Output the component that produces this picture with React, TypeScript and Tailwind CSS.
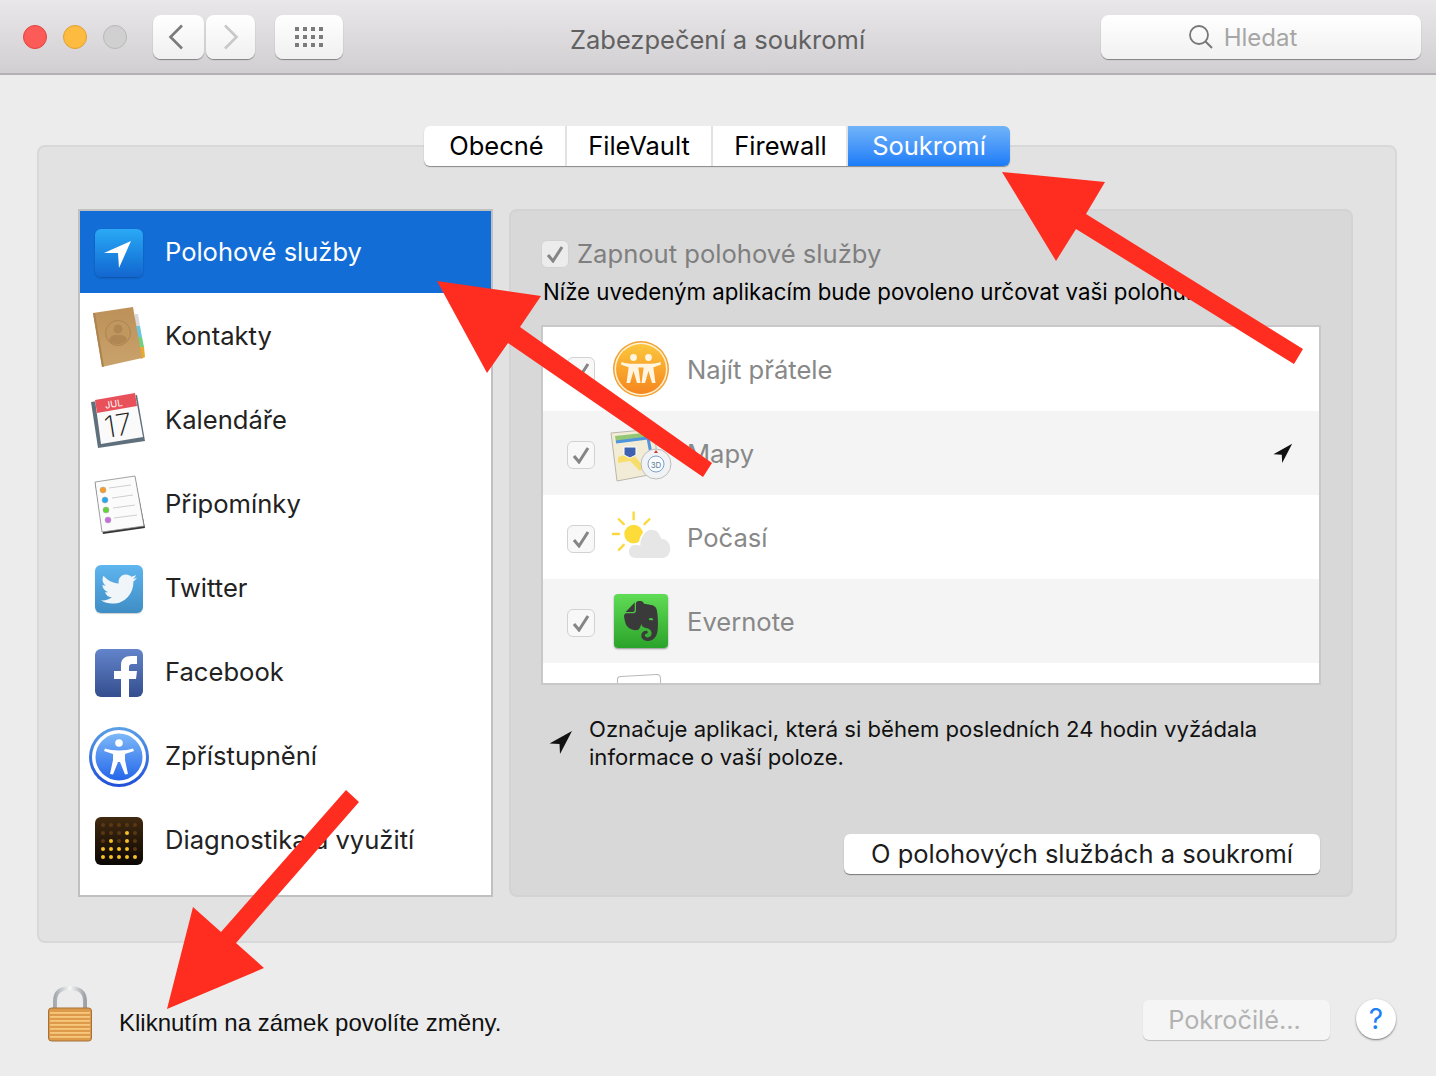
import { SiEvernote } from "react-icons/si";
import { FaTwitter } from "react-icons/fa";

const font = "font-['Inter','Noto_Sans',sans-serif]";

const LocationArrow = ({ className = "" }: { className?: string }) => (
  <svg viewBox="0 0 24 24" className={className}>
    <path d="M23 1 L0.5 13.5 L10.5 14 L11 24 Z" fill="currentColor" />
  </svg>
);

const ContactsIcon = () => (
  <svg viewBox="0 0 60 62" className="w-[60px] h-[62px]">
    <defs>
      <linearGradient id="book" x1="0" y1="0" x2="0" y2="1">
        <stop offset="0" stopColor="#bd9159" />
        <stop offset="1" stopColor="#c9a26b" />
      </linearGradient>
    </defs>
    <path d="M46 8 L49 8 L51 20 L46 20 Z" fill="#d8d8d8" />
    <path d="M47 20 L51 20 L53 31 L48 31 Z" fill="#6cc5e0" />
    <path d="M48 31 L53 31 L55 41 L50 41 Z" fill="#72cf7e" />
    <path d="M50 41 L55 41 L56 51 L52 53 Z" fill="#e8a92e" />
    <path d="M4 7 L44 1 L53 52 L13 61 Z" fill="url(#book)" />
    <path d="M4 7 L6 7 L15 60.5 L13 61 Z" fill="#ad8450" />
    <circle cx="29" cy="27" r="12.5" fill="#c0985f" stroke="#ad8450" strokeWidth="1" />
    <circle cx="29" cy="23" r="4.5" fill="#b08652" />
    <path d="M20 35 C21 29 25 29 29 29 C33 29 37 29 38 34 C34 39 25 40 20 35 Z" fill="#b08652" />
  </svg>
);

const CalendarIcon = () => (
  <svg viewBox="0 1 60 60" className="w-[60px] h-[60px]">
    <path d="M2 12 L48 5 L56 51 L9 58 Z" fill="#5f707c" />
    <path d="M6 10 L46 3 L54 47 L12 54 Z" fill="#fafafa" />
    <path d="M6 10 L46 3 L48 16 L8 23 Z" fill="#e8505a" />
    <g transform="rotate(-9 28 28)">
      <text x="27" y="17" textAnchor="middle" fontSize="9.5" fill="#ffffff" fontFamily="Inter">JUL</text>
      <text x="28" y="46" textAnchor="middle" fontSize="30" fontWeight="200" fill="#222222" fontFamily="Inter">17</text>
    </g>
  </svg>
);

const RemindersIcon = () => (
  <svg viewBox="0 1 60 60" className="w-[60px] h-[60px]">
    <path d="M6 9 L46 3 L56 54 L14 60 Z" fill="#333333" />
    <path d="M6 8 L46 2 L55 52 L13 58 Z" fill="#fbfbfb" stroke="#8a8a8a" strokeWidth="0.8" />
    <g stroke="#cfcfcf" strokeWidth="1">
      <path d="M20 14 L42 11" />
      <path d="M23 24 L44 21" />
      <path d="M24 34 L46 31" />
      <path d="M25 44 L48 41" />
    </g>
    <circle cx="14" cy="16" r="3" fill="#fb9a25" stroke="#aaa" strokeWidth="0.6" />
    <circle cx="16" cy="26" r="3" fill="#22a7f0" stroke="#aaa" strokeWidth="0.6" />
    <circle cx="17" cy="36" r="3" fill="#62d13a" stroke="#aaa" strokeWidth="0.6" />
    <circle cx="19" cy="46" r="3" fill="#c96be0" stroke="#aaa" strokeWidth="0.6" />
  </svg>
);

const TwitterIcon = () => (
  <div className="w-12 h-12 rounded-md bg-gradient-to-b from-[#5fb5ef] to-[#3f8dc5] flex items-center justify-center shadow-[0_1px_1px_rgba(0,0,0,0.2)]">
    <FaTwitter className="w-[36px] h-[36px] text-[#f0f5f9]" />
  </div>
);

const FacebookIcon = () => (
  <svg viewBox="0 0 48 48" className="w-12 h-12">
    <defs>
      <linearGradient id="fb" x1="0" y1="0" x2="0" y2="1">
        <stop offset="0" stopColor="#6384cb" />
        <stop offset="1" stopColor="#344e8e" />
      </linearGradient>
    </defs>
    <rect width="48" height="48" rx="6" fill="url(#fb)" />
    <path d="M26 48 V30 H19 V22 H26 V16 C26 10 30 7 36 7 H42 V15 H37 C35 15 34 16 34 18 V22 H42 L41 30 H34 V48 Z" fill="#ffffff" />
  </svg>
);

const AccessIcon = () => (
  <svg viewBox="0 0 60 60" className="w-[60px] h-[60px]">
    <defs>
      <linearGradient id="acc" x1="0" y1="0" x2="0" y2="1">
        <stop offset="0" stopColor="#7db8f8" />
        <stop offset="1" stopColor="#2466ea" />
      </linearGradient>
      <linearGradient id="accr" x1="0" y1="0" x2="0" y2="1">
        <stop offset="0" stopColor="#5aa0e6" />
        <stop offset="1" stopColor="#1f4fd8" />
      </linearGradient>
    </defs>
    <circle cx="30" cy="30" r="30" fill="url(#accr)" />
    <circle cx="30" cy="30" r="27" fill="#ffffff" />
    <circle cx="30" cy="30" r="23.5" fill="url(#acc)" />
    <circle cx="30" cy="16" r="3.8" fill="#ffffff" />
    <path d="M16 21.5 C22 24 38 24 44 21.5 L45 24 L36 27 L36 33 L39 47 L36 47.5 L31 35 H29 L24 47.5 L21 47 L24 33 L24 27 L15 24 Z" fill="#ffffff" />
  </svg>
);

const DiagnosticsIcon = () => {
  const rows = [8, 16, 24, 32, 40];
  return (
    <svg viewBox="0 0 48 48" className="w-12 h-12">
      <defs>
        <linearGradient id="diag" x1="0" y1="0" x2="0" y2="1">
          <stop offset="0" stopColor="#40290f" />
          <stop offset="1" stopColor="#0b0704" />
        </linearGradient>
      </defs>
      <rect width="48" height="48" rx="6" fill="url(#diag)" />
      {rows.map((r, ri) =>
        rows.map((c, ci) => {
          const on =
            ri === 4 ||
            (ri === 3 && ci < 4) ||
            (ri === 2 && (ci === 1 || ci === 3)) ||
            (ri === 1 && ci === 3);
          return <circle key={`${ri}${ci}`} cx={c} cy={r} r="2" fill={on ? "#f5c127" : "#5a3814"} />;
        })
      )}
    </svg>
  );
};

const FriendsIcon = () => (
  <svg viewBox="0 0 60 60" className="w-[60px] h-[60px]">
    <defs>
      <linearGradient id="ff" x1="0" y1="0" x2="0" y2="1">
        <stop offset="0" stopColor="#fcc63c" />
        <stop offset="1" stopColor="#f5861f" />
      </linearGradient>
    </defs>
    <circle cx="30" cy="30" r="28" fill="#f2a033" />
    <circle cx="30" cy="30" r="26.5" fill="#fff1cf" />
    <circle cx="30" cy="30" r="25" fill="url(#ff)" />
    <circle cx="22.5" cy="18.5" r="3.4" fill="#fff5e0" />
    <circle cx="37.5" cy="18.5" r="3.4" fill="#fff5e0" />
    <path d="M10.5 23 C15 24.5 19 24.8 22.5 24.8 H37.5 C41 24.8 45 24.5 49.5 23 L50 25.5 L42 28.5 L37 28.5 L23 28.5 L18 28.5 L10 25.5 Z" fill="#fff5e0" />
    {[22.5, 37.5].map((cx) => (
      <g key={cx} transform={`translate(${cx} 0)`}>
        <path d="M-4.5 26 L-7 44 H-3.5 L0 32 L3.5 44 H7 L4.5 26 Z" fill="#fff5e0" />
      </g>
    ))}
  </svg>
);

const MapsIcon = () => (
  <svg viewBox="0 0 62 60" className="w-[62px] h-[60px]">
    <path d="M1 10 L44 6 L49 50 L7 58 Z" fill="#f2ecd6" stroke="#b9b7ac" strokeWidth="1" />
    <path d="M5 13 L42 9 L43 15 L6 19 Z" fill="#93c774" />
    <path d="M6 19 L38 15 L42 36 L46 40" fill="none" stroke="#4e95dd" strokeWidth="3" />
    <path d="M8 34 L22 30 L34 44 L30 48 L20 38 L8 40 Z" fill="#f7de6c" />
    <path d="M14 24 H26 V32 L20 35 L14 32 Z" fill="#3f62b0" stroke="#ffffff" strokeWidth="1" />
    <circle cx="46" cy="41" r="15" fill="#f0f2f4" stroke="#bcbcbc" strokeWidth="1" />
    <circle cx="46" cy="41" r="8" fill="#fafbfc" stroke="#7ba3c9" strokeWidth="1" />
    <text x="46" y="44.5" textAnchor="middle" fontSize="8" fill="#5a7da0" fontFamily="Inter">3D</text>
    <path d="M46 27 L48 30 H44 Z" fill="#d9342b" />
  </svg>
);

const WeatherIcon = () => (
  <svg viewBox="0 0 63 60" className="w-[63px] h-[60px]">
    <g stroke="#fbd93d" strokeWidth="2.4" strokeLinecap="round">
      <path d="M24 5 V12" />
      <path d="M9 12 L14 17" />
      <path d="M40 12 L35 17" />
      <path d="M3 27 H9" />
      <path d="M9 43 L14 38" />
    </g>
    <circle cx="24" cy="27" r="9.5" fill="#fddc3a" />
    <path d="M26 52 C21 52 18.5 49 18.5 45 C18.5 40 22 37 26 37 C28 37 29 37.5 30 38 C30 29 36 22 42 22 C48 22 51 26 52.5 31 C58 31 62 36 62 42 C62 48 58 52 54 52 Z" fill="#e6e6e6" stroke="#ffffff" strokeWidth="1.5" />
  </svg>
);

const EvernoteIcon = () => (
  <div className="w-[54px] h-[54px] rounded-sm bg-gradient-to-b from-[#5fdc55] to-[#2aa32a] flex items-center justify-center shadow-[0_1px_2px_rgba(0,0,0,0.4)]">
    <SiEvernote className="w-[40px] h-[40px] text-[#3a3a3a]" />
  </div>
);

const LockIcon = () => (
  <svg viewBox="0 0 44 56" className="w-[44px] h-[56px]">
    <defs>
      <linearGradient id="shackle" x1="0" y1="0" x2="1" y2="0">
        <stop offset="0" stopColor="#a4a9af" />
        <stop offset="0.5" stopColor="#f7f7f7" />
        <stop offset="1" stopColor="#9ca1a7" />
      </linearGradient>
    </defs>
    <path d="M7 23 V15 C7 6 13 2 22 2 C31 2 37 6 37 15 V23" fill="none" stroke="url(#shackle)" strokeWidth="4" />
    <rect x="0.5" y="22" width="43" height="33" rx="3" fill="#dd9a4a" stroke="#a5703a" />
    {[26, 30, 34, 38, 42, 46, 50].map((y) => (
      <rect key={y} x="2" y={y} width="40" height="1.8" fill="#f6c77d" />
    ))}
  </svg>
);

const Check = ({ className = "" }: { className?: string }) => (
  <div className={`w-[28px] h-[28px] rounded-md border-[1.5px] border-[#d2d2d2] flex items-center justify-center ${className}`}>
    <svg viewBox="0 0 18 18" className="w-[18px] h-[18px]">
      <path d="M2 10 L7 16 L16 2" fill="none" stroke="#858585" strokeWidth="3" />
    </svg>
  </div>
);

const sideItems = [
  { label: "Kontakty", icon: <ContactsIcon /> },
  { label: "Kalendáře", icon: <CalendarIcon /> },
  { label: "Připomínky", icon: <RemindersIcon /> },
  { label: "Twitter", icon: <TwitterIcon /> },
  { label: "Facebook", icon: <FacebookIcon /> },
  { label: "Zpřístupnění", icon: <AccessIcon /> },
  { label: "Diagnostika a využití", icon: <DiagnosticsIcon /> },
];

const apps = [
  { label: "Najít přátele", icon: <FriendsIcon />, bg: "bg-white" },
  { label: "Mapy", icon: <MapsIcon />, bg: "bg-[#f4f4f4]", recent: true },
  { label: "Počasí", icon: <WeatherIcon />, bg: "bg-white" },
  { label: "Evernote", icon: <EvernoteIcon />, bg: "bg-[#f4f4f4]" },
];

const tabs = [
  { label: "Obecné", width: "w-[143px] pl-[4px]" },
  { label: "FileVault", width: "w-[146px]" },
  { label: "Firewall", width: "w-[135px] pl-[2px]" },
];

const Titlebar = () => (
  <div className="h-[75px] shrink-0 flex items-center pt-[1px] bg-gradient-to-b from-[#e9e7e9] to-[#d1cfd1] border-b-2 border-[#b2b0b2]">
    <div className="flex gap-4 pl-[23px]">
      <div className="w-6 h-6 rounded-full bg-[#fc5b57] border border-[#e0443e]" />
      <div className="w-6 h-6 rounded-full bg-[#fdbc40] border border-[#dea034]" />
      <div className="w-6 h-6 rounded-full bg-[#d0d0d0] border border-[#b8b8b8]" />
    </div>
    <div className="flex gap-[2px] ml-[26px]">
      <div className="w-[51px] h-[44px] rounded-lg bg-gradient-to-b from-white to-[#f0f0f0] shadow-[0_1px_1px_rgba(0,0,0,0.4)] flex items-center justify-center pr-[5px]">
        <svg viewBox="0 0 16 26" className="w-4 h-[26px]">
          <path d="M14 1.5 L2.5 13 L14 24.5" fill="none" stroke="#7b7b7b" strokeWidth="2.6" />
        </svg>
      </div>
      <div className="w-[49px] h-[44px] rounded-lg bg-gradient-to-b from-white to-[#f0f0f0] shadow-[0_1px_1px_rgba(0,0,0,0.4)] flex items-center justify-center">
        <svg viewBox="0 0 16 26" className="w-4 h-[26px]">
          <path d="M2 1.5 L13.5 13 L2 24.5" fill="none" stroke="#c8c8c8" strokeWidth="2.6" />
        </svg>
      </div>
    </div>
    <div className="ml-5 w-[68px] h-[44px] rounded-lg bg-gradient-to-b from-white to-[#f0f0f0] shadow-[0_1px_1px_rgba(0,0,0,0.4)] flex items-center justify-center">
      <div className="grid grid-cols-4 gap-x-[4.3px] gap-y-[4px]">
        {Array.from({ length: 12 }).map((_, i) => (
          <div key={i} className="w-1 h-1 bg-[#7b7b7b]" />
        ))}
      </div>
    </div>
    <div className="flex-1 text-center pr-[9px] pt-[6px] text-[25.5px] text-[#616161]">Zabezpečení a soukromí</div>
    <div className="w-[320px] h-[44px] mr-[15px] rounded-lg bg-gradient-to-b from-white to-[#f1f1f1] shadow-[0_1px_1px_rgba(0,0,0,0.4)] flex items-center justify-center gap-[10px] pr-[37px]">
      <svg viewBox="0 0 26 26" className="w-[26px] h-[26px]">
        <circle cx="11" cy="11" r="9" fill="none" stroke="#777777" strokeWidth="1.8" />
        <path d="M17.5 17.5 L24 24" stroke="#777777" strokeWidth="2" />
      </svg>
      <span className="text-[24px] pt-[2px] text-[#a6a6a6]">Hledat</span>
    </div>
  </div>
);

const Sidebar = () => (
  <div className="w-[415px] h-[688px] bg-white border-2 border-[#c0c0c0] flex flex-col">
    <div className="h-[82px] shrink-0 bg-[#126dd6] flex items-center pl-[9px] text-white">
      <div className="w-[60px] mt-[2px] flex justify-center">
        <div className="w-12 h-12 rounded-md bg-gradient-to-b from-[#2aa9f5] to-[#1466d0] shadow-[0_1px_2px_rgba(0,0,0,0.25)]">
          <svg viewBox="0 0 48 48" className="w-12 h-12">
            <path d="M36 12 L9 24 L23 24 L24 39 Z" fill="#ffffff" />
          </svg>
        </div>
      </div>
      <span className="ml-4 text-[25.5px]">Polohové služby</span>
    </div>
    {sideItems.map((item) => (
      <div key={item.label} className="h-[84px] shrink-0 flex items-center pl-[9px] text-[#222222]">
        <div className="w-[60px] mt-1 flex justify-center">{item.icon}</div>
        <span className="ml-4 pt-[2px] text-[25.6px]">{item.label}</span>
      </div>
    ))}
  </div>
);

const LocationPanel = () => (
  <div className="w-[844px] h-[688px] rounded-lg bg-[#d8d8d8] border-2 border-[#d3d3d3] pl-[30px] pr-[30px] flex flex-col">
    <div className="flex items-center mt-[29px] h-[28px]">
      <Check className="bg-[#ececec]" />
      <span className="ml-2 text-[25.6px] text-[#7f7f7f]">Zapnout polohové služby</span>
    </div>
    <p className="mt-[10px] ml-[2px] text-[22.25px] leading-[28px] text-black whitespace-nowrap">
      Níže uvedeným aplikacím bude povoleno určovat vaši polohu.
    </p>
    <div className="mt-[19px] w-[780px] h-[360px] border-2 border-[#c8c8c8] bg-white overflow-hidden">
      {apps.map((app) => (
        <div key={app.label} className={`h-[84px] flex items-center pl-[24px] ${app.bg}`}>
          <Check className="mt-[3px] bg-[#f8f8f8]" />
          <div className="w-[62px] ml-[15px] flex justify-center">{app.icon}</div>
          <span className="ml-[15px] pt-[2px] text-[25.6px] text-[#888888]">{app.label}</span>
          {app.recent && <LocationArrow className="ml-auto mr-[26px] w-5 h-5 text-[#111111]" />}
        </div>
      ))}
      <div className="ml-[74px] mt-[12px] w-[44px] h-[12px] rounded-t-sm border border-[#b8b8b8] bg-white -rotate-3" />
    </div>
    <div className="flex mt-[30px]">
      <LocationArrow className="w-6 h-6 mt-[15px] ml-[8px] text-[#111111]" />
      <p className="ml-4 text-[22.1px] leading-[28px] text-[#111111]">
        Označuje aplikaci, která si během posledních 24 hodin vyžádala
        <br />
        informace o vaší poloze.
      </p>
    </div>
    <div className="flex justify-end mt-[63px]">
      <div className="w-[476px] h-[40px] mr-[1px] rounded-md bg-white shadow-[0_1px_1px_rgba(0,0,0,0.45)] flex items-center justify-center text-[25.5px] text-[#1c1c1c]">
        O polohových službách a soukromí
      </div>
    </div>
  </div>
);

const App = () => {
  return (
    <div className={`relative w-[1436px] h-[1076px] overflow-hidden bg-[#ececec] flex flex-col ${font}`}>
      <Titlebar />
      <div className="mt-[70px] ml-[37px] w-[1360px] h-[798px] bg-[#e2e2e2] border-2 border-[#d8d8d8] rounded-lg flex flex-col items-center">
        <div className="-mt-[21px] h-[40px] flex rounded-md bg-white shadow-[0_1px_1px_rgba(0,0,0,0.4)] text-[25.5px] text-black">
          {tabs.map((tab) => (
            <div key={tab.label} className={`${tab.width} border-r-2 border-[#e2e2e2] flex items-center justify-center`}>
              {tab.label}
            </div>
          ))}
          <div className="w-[162px] rounded-r-md bg-gradient-to-b from-[#70b3f9] to-[#1a7cf8] text-white flex items-center justify-center">
            Soukromí
          </div>
        </div>
        <div className="mt-[43px] self-start ml-[39px] flex gap-4">
          <Sidebar />
          <LocationPanel />
        </div>
      </div>
      <div className="flex-1 flex items-start pl-[48px] pr-[40px] pt-[43px]">
        <LockIcon />
        <span className="ml-[27px] mt-[23px] font-['Liberation_Sans',sans-serif] text-[24px] leading-[28px] text-[#111111]">
          Kliknutím na zámek povolíte změny.
        </span>
        <div className="ml-auto mt-[14px] w-[187px] h-[40px] pr-[4px] rounded-md bg-[#f5f5f5] shadow-[0_1px_1px_rgba(0,0,0,0.2)] flex items-center justify-center text-[25.3px] text-[#b3b3b3]">
          Pokročilé...
        </div>
        <div className="ml-[26px] mt-[13px] w-10 h-10 rounded-full bg-white shadow-[0_1px_2px_rgba(0,0,0,0.5)] flex items-center justify-center text-[28px] text-[#1f7ff5]">
          ?
        </div>
      </div>
      {/* red annotation arrows drawn over the window */}
      <svg viewBox="0 0 1436 1076" className="absolute inset-0 w-[1436px] h-[1076px] pointer-events-none">
        <polygon fill="#fe2d20" points="1002,172 1105,182 1086,214 1303,349 1294,364 1076,229 1056,261" />
        <polygon fill="#fe2d20" points="437,281 541,296 520,327 712,463 703,477 508,343 487,373" />
        <polygon fill="#fe2d20" points="167,1009 264,968 236,943 359,802 346,790 221,932 193,907" />
      </svg>
    </div>
  );
};

export default App;
